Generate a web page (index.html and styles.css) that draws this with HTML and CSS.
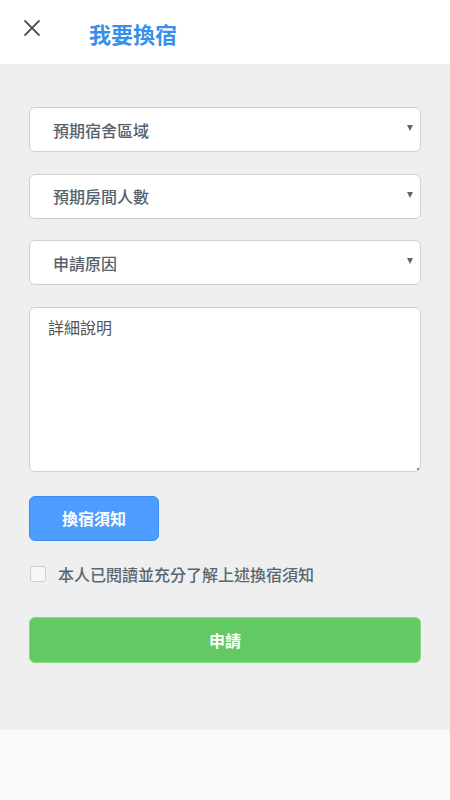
FILE: index.html
```html
<!DOCTYPE html>
<html lang="zh-Hant">
<head>
<meta charset="utf-8">
<title>我要換宿</title>
<link rel="stylesheet" href="styles.css">
</head>
<body>
<header class="topbar">
  <span class="close">
    <svg width="18" height="18" viewBox="0 0 18 18"><path d="M1.5 1.5 L16.5 16.5 M16.5 1.5 L1.5 16.5" stroke="#555" stroke-width="1.8" fill="none"/></svg>
  </span>
  <h1 class="title">我要換宿</h1>
</header>
<main class="content">
  <div class="select"><span>預期宿舍區域</span><i class="arrow"></i></div>
  <div class="select"><span>預期房間人數</span><i class="arrow"></i></div>
  <div class="select"><span>申請原因</span><i class="arrow"></i></div>
  <div class="textarea"><span>詳細說明</span><i class="grip"></i></div>
  <button class="btn-notice">換宿須知</button>
  <label class="agree"><span class="box"></span><span>本人已閱讀並充分了解上述換宿須知</span></label>
  <button class="btn-apply">申請</button>
</main>
<footer class="bottom"></footer>
</body>
</html>
```

FILE: styles.css
```css
* { box-sizing: border-box; }
html, body { margin: 0; padding: 0; }
body {
  width: 450px;
  height: 800px;
  font-family: "Noto Sans CJK TC", "Noto Sans", sans-serif;
  background: #f9f9f9;
  display: flex;
  flex-direction: column;
}
.topbar {
  height: 64px;
  background: #fff;
  display: flex;
  align-items: center;
  padding-left: 23px;
}
.close { display: flex; width: 18px; height: 18px; margin-top: -9px; }
.title {
  margin: 1px 0 0 48px;
  font-size: 22px;
  font-weight: 700;
  color: #3a8fe8;
  line-height: 1;
}
.content {
  height: 666px;
  background: #efefef;
  padding: 43px 29px 0 29px;
  display: flex;
  flex-direction: column;
}
.select {
  height: 45px;
  flex-shrink: 0;
  background: #fff;
  border: 1px solid #d0d0d0;
  border-radius: 6px;
  display: flex;
  align-items: center;
  padding-left: 23px;
  position: relative;
  margin-bottom: 21.5px;
  font-size: 16px;
  font-weight: 500;
  color: #56626b;
}
.arrow {
  position: absolute;
  right: 7px;
  top: 17px;
  width: 0;
  height: 0;
  border-left: 3px solid transparent;
  border-right: 3px solid transparent;
  border-top: 6px solid #5b6770;
}
.textarea {
  height: 165px;
  flex-shrink: 0;
  background: #fff;
  border: 1px solid #d0d0d0;
  border-radius: 6px;
  padding: 7px 18px;
  font-size: 16px;
  color: #555;
  position: relative;
  margin-bottom: 24px;
}
.grip {
  position: absolute; right: 1px; bottom: 1px; width: 2px; height: 2px; background: #888;
}
.btn-notice {
  width: 130px;
  height: 45px;
  flex-shrink: 0;
  background: #4d9cff;
  border: 1px solid #3c8cf0;
  border-radius: 6px;
  color: #fff;
  font-family: inherit;
  font-size: 16px;
  font-weight: 700;
  padding: 0;
}
.agree {
  display: flex;
  align-items: center;
  margin-top: 23px;
  height: 20px;
  font-size: 16px;
  font-weight: 500;
  color: #5a6770;
}
.box {
  width: 16px;
  height: 16px;
  border: 1px solid #cfcfcf;
  border-radius: 3px;
  background: #f7f7f7;
  margin: 0 12px 0 1px;
}
.btn-apply {
  margin-top: 33px;
  height: 46px;
  flex-shrink: 0;
  background: #63c963;
  border: 1px solid #88d888;
  border-radius: 6px;
  color: #fff;
  font-family: inherit;
  font-size: 16px;
  font-weight: 700;
  padding: 0;
}
.bottom { flex: 1; background: #f9f9f9; }
```
